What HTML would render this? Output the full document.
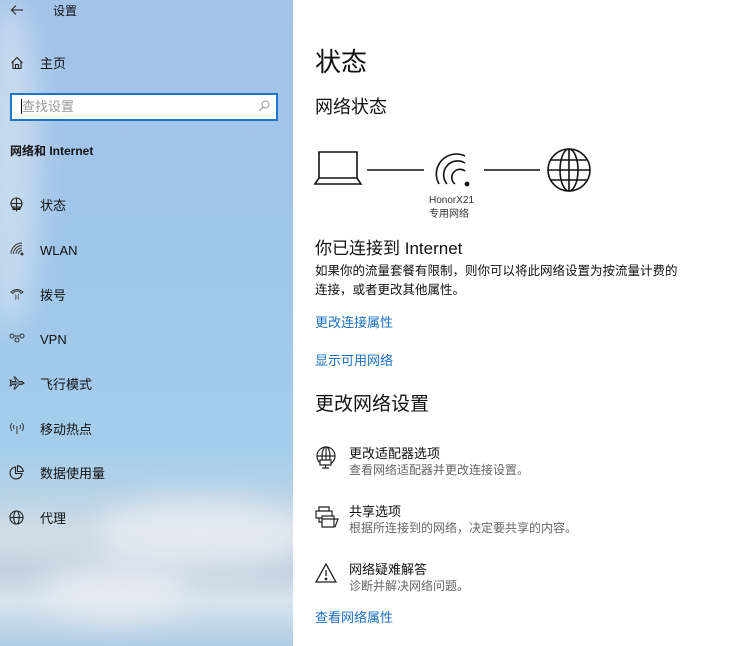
<!DOCTYPE html>
<html><head><meta charset="utf-8"><style>
*{margin:0;padding:0;box-sizing:border-box}
body{width:751px;height:646px;overflow:hidden;position:relative;font-family:"Liberation Sans","Noto Sans CJK SC",sans-serif;color:#111;background:#fff}
.side{position:absolute;left:0;top:0;width:293px;height:646px;background:linear-gradient(180deg,#a3c3e9 0%,#a0c6ea 40%,#a5cdeb 70%,#c9d9e6 82%,#bfcfe0 88%,#d8e4ee 93%,#b0cde6 100%);overflow:hidden}
.cloud{position:absolute;border-radius:50%;filter:blur(14px)}
.t{position:absolute;white-space:nowrap;line-height:1}
.ic{position:absolute}
.blue{color:#1a6fc4}
.gray{color:#666}
</style></head><body>
<div class="side">
<div class="cloud" style="left:-20px;top:0;width:60px;height:330px;background:rgba(235,240,245,.5)"></div>
<div class="cloud" style="left:90px;top:500px;width:220px;height:70px;background:rgba(232,236,242,.85)"></div>
<div class="cloud" style="left:40px;top:560px;width:150px;height:60px;background:rgba(232,236,242,.8)"></div>
<div class="cloud" style="left:-30px;top:520px;width:120px;height:40px;background:rgba(215,222,232,.7)"></div>
</div>
<svg class="ic" style="left:10px;top:4px" width="14" height="12" viewBox="0 0 14 12" fill="none" stroke="#333" stroke-width="1.2"><path d="M13 6H2M6 1.5L1.5 6 6 10.5"/></svg>
<div class="t" style="left:53px;top:5px;font-size:12px">设置</div>
<svg class="ic" style="left:10px;top:56px" width="14" height="14" viewBox="0 0 14 14" fill="none" stroke="#222" stroke-width="1.1"><path d="M1.5 7L7 1.5 12.5 7M3 5.5V12.5H11V5.5M5.5 12.5V8.5H8.5V12.5"/></svg>
<div class="t" style="left:40px;top:57px;font-size:13px">主页</div>
<div style="position:absolute;left:10px;top:93px;width:268px;height:28px;background:#fff;border:2px solid #1e74c8"></div>
<div style="position:absolute;left:21px;top:99px;width:1px;height:15px;background:#000"></div>
<div class="t" style="left:22px;top:100px;font-size:13px;color:#999">查找设置</div>
<svg class="ic" style="left:258px;top:100px" width="12" height="12" viewBox="0 0 12 12" fill="none" stroke="#999" stroke-width="1"><circle cx="7.5" cy="4.5" r="3.5"/><path d="M5 7L1 11"/></svg>
<div class="t" style="left:10px;top:145px;font-size:12px;font-weight:bold">网络和 Internet</div>
<svg class="ic" style="left:9px;top:197px" width="15" height="15" viewBox="0 0 15 15" fill="none" stroke="#222" stroke-width="1.1"><circle cx="7.5" cy="6.5" r="5.5"/><path d="M2 6.5H13M7.5 1V12M4 10H11V12.5H4ZM7.5 12.5V14.5"/></svg>
<div class="t" style="left:40px;top:199px;font-size:13px">状态</div>
<svg class="ic" style="left:10px;top:242px" width="14" height="14" viewBox="0 0 14 14" fill="none" stroke="#333" stroke-width="1"><path d="M1 12A11 11 0 0 1 12 1M3.5 12A8.5 8.5 0 0 1 12 3.5M6 12A6 6 0 0 1 12 6M8.5 12A3.5 3.5 0 0 1 12 8.5"/><circle cx="12" cy="12" r="1" fill="#222"/></svg>
<div class="t" style="left:40px;top:244px;font-size:13px">WLAN</div>
<svg class="ic" style="left:10px;top:287px" width="14" height="14" viewBox="0 0 14 14" fill="none" stroke="#333" stroke-width="1"><path d="M1 5Q7 0 13 5L11 6.5 9.5 4.5Q7 3.5 4.5 4.5L3 6.5Z"/><path d="M5 8h1M8 8h1M5 10h1M8 10h1M5 12h1M8 12h1M6.5 9h1M6.5 11h1"/></svg>
<div class="t" style="left:40px;top:289px;font-size:13px">拨号</div>
<svg class="ic" style="left:9px;top:333px" width="16" height="10" viewBox="0 0 16 10" fill="none" stroke="#333" stroke-width="1"><circle cx="3" cy="3" r="2"/><circle cx="13" cy="3" r="2"/><circle cx="8" cy="7" r="2"/><path d="M5 3H11"/></svg>
<div class="t" style="left:40px;top:333px;font-size:13px">VPN</div>
<svg class="ic" style="left:9px;top:376px" width="16" height="14" viewBox="0 0 16 14" fill="none" stroke="#333" stroke-width="1"><path d="M1 7H15L13 5.5H10L6 1H5L7 5.5H3L2 4H1L1.8 7L1 10H2L3 8.5H7L5 13H6L10 8.5H13L15 7"/></svg>
<div class="t" style="left:40px;top:378px;font-size:13px">飞行模式</div>
<svg class="ic" style="left:9px;top:421px" width="16" height="14" viewBox="0 0 16 14" fill="none" stroke="#333" stroke-width="1"><path d="M3 2Q0 6 3 10M13 2Q16 6 13 10M5 4Q4 6 5 8M11 4Q12 6 11 8M8 5V13"/></svg>
<div class="t" style="left:40px;top:423px;font-size:13px">移动热点</div>
<svg class="ic" style="left:9px;top:465px" width="15" height="15" viewBox="0 0 15 15" fill="none" stroke="#222" stroke-width="1.1"><path d="M6.5 2A6 6 0 1 0 13 8.5H6.5Z"/><path d="M8.5 0.8A6 6 0 0 1 14.2 6.5H8.5Z"/></svg>
<div class="t" style="left:40px;top:467px;font-size:13px">数据使用量</div>
<svg class="ic" style="left:9px;top:510px" width="15" height="15" viewBox="0 0 15 15" fill="none" stroke="#222" stroke-width="1.1"><circle cx="7.5" cy="7.5" r="6.5"/><ellipse cx="7.5" cy="7.5" rx="2.8" ry="6.5"/><path d="M1 7.5H14"/></svg>
<div class="t" style="left:40px;top:512px;font-size:13px">代理</div>

<div class="t" style="left:315px;top:49px;font-size:26px">状态</div>
<div class="t" style="left:315px;top:98px;font-size:18px">网络状态</div>
<svg class="ic" style="left:314px;top:146px" width="280" height="48" viewBox="0 0 280 48" fill="none" stroke="#111" stroke-width="1.6">
<path d="M5 6H43V32H5ZM5 32L1 38H47L43 32Z"/>
<path d="M53 24H110M170 24H226"/>
<path d="M125 38A20 20 0 0 1 151 10M133 38A14 14 0 0 1 151 17M141 38A8 8 0 0 1 151 25"/>
<circle cx="153" cy="38" r="1.6" fill="#111"/>
<circle cx="255" cy="24" r="21"/><ellipse cx="255" cy="24" rx="9" ry="21"/><path d="M234 24H276M237 14H273M237 34H273M255 3V45"/>
</svg>
<div class="t" style="left:429px;top:196px;font-size:10px;color:#333">HonorX21</div>
<div class="t" style="left:429px;top:210px;font-size:10px;color:#333">专用网络</div>
<div class="t" style="left:315px;top:240px;font-size:17px">你已连接到 Internet</div>
<div class="t" style="left:315px;top:265px;font-size:12.5px">如果你的流量套餐有限制，则你可以将此网络设置为按流量计费的</div>
<div class="t" style="left:315px;top:284px;font-size:12.5px">连接，或者更改其他属性。</div>
<div class="t blue" style="left:315px;top:316px;font-size:13px">更改连接属性</div>
<div class="t blue" style="left:315px;top:354px;font-size:13px">显示可用网络</div>
<div class="t" style="left:315px;top:395px;font-size:19px">更改网络设置</div>
<svg class="ic" style="left:315px;top:446px" width="22" height="24" viewBox="0 0 22 24" fill="none" stroke="#222" stroke-width="1.2"><circle cx="11" cy="10" r="9"/><ellipse cx="11" cy="10" rx="4" ry="9"/><path d="M2 10H20M11 1V19"/><path d="M5 14H16V19H5Z" fill="#fff"/><path d="M10.5 19V22M7 22H14"/></svg>
<div class="t" style="left:349px;top:447px;font-size:13px">更改适配器选项</div>
<div class="t gray" style="left:349px;top:464px;font-size:12px">查看网络适配器并更改连接设置。</div>
<svg class="ic" style="left:315px;top:505px" width="24" height="24" viewBox="0 0 24 24" fill="none" stroke="#222" stroke-width="1.2"><path d="M4 2H14V6H4ZM1 6H17V13H1ZM4 13V17H8"/><path d="M7 11H19V22H7Z" fill="#fff"/><path d="M7 14H23L20 22"/></svg>
<div class="t" style="left:349px;top:505px;font-size:13px">共享选项</div>
<div class="t gray" style="left:349px;top:522px;font-size:12px">根据所连接到的网络，决定要共享的内容。</div>
<svg class="ic" style="left:315px;top:563px" width="22" height="20" viewBox="0 0 22 20" fill="none" stroke="#222" stroke-width="1.3"><path d="M11 1L21 19H1Z"/><path d="M11 7V13"/><circle cx="11" cy="16" r=".7" fill="#222"/></svg>
<div class="t" style="left:349px;top:563px;font-size:13px">网络疑难解答</div>
<div class="t gray" style="left:349px;top:580px;font-size:12px">诊断并解决网络问题。</div>
<div class="t blue" style="left:315px;top:611px;font-size:13px">查看网络属性</div>
</body></html>
